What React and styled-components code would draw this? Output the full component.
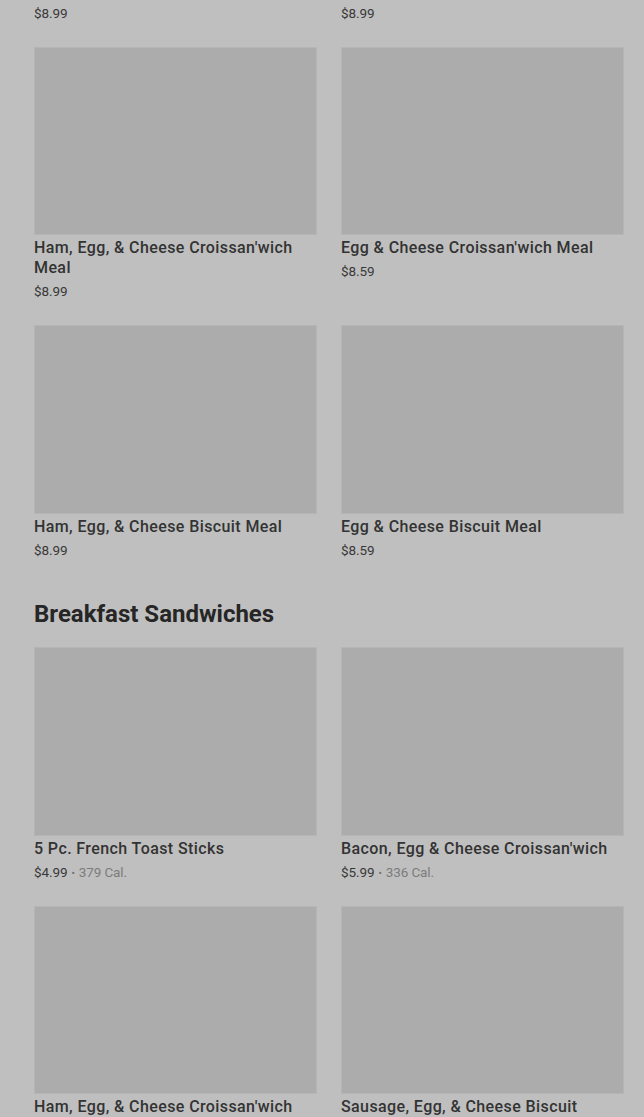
import React from "react";
import styled, { createGlobalStyle } from "styled-components";

const GlobalStyle = createGlobalStyle`
	html, body {
		margin: 0;
		padding: 0;
		background: #bfbfbf;
		overflow: hidden;
	}
	body {
		font-family: Roboto, "Liberation Sans", Arial, sans-serif;
		-webkit-font-smoothing: antialiased;
	}
`;

const sections = [
	{
		title: null,
		items: [
			{ name: "Sausage, Egg, & Cheese Biscuit Meal", price: "$8.99" },
			{ name: "Bacon, Egg & Cheese Croissan'wich", price: "$8.99" },
			{ name: "Ham, Egg, & Cheese Croissan'wich Meal", price: "$8.99" },
			{ name: "Egg & Cheese Croissan'wich Meal", price: "$8.59" },
			{ name: "Ham, Egg, & Cheese Biscuit Meal", price: "$8.99" },
			{ name: "Egg & Cheese Biscuit Meal", price: "$8.59" },
		],
	},
	{
		title: "Breakfast Sandwiches",
		items: [
			{ name: "5 Pc. French Toast Sticks", price: "$4.99", cal: "379 Cal." },
			{ name: "Bacon, Egg & Cheese Croissan'wich", price: "$5.99", cal: "336 Cal." },
			{ name: "Ham, Egg, & Cheese Croissan'wich", price: "$5.99", cal: "330 Cal." },
			{ name: "Sausage, Egg, & Cheese Biscuit", price: "$5.99", cal: "520 Cal." },
		],
	},
];

const App = () => {
	return (
		<>
			<GlobalStyle />
			<Page>
				{sections.map((section, i) => (
					<Section key={i}>
						{section.title && <SectionTitle>{section.title}</SectionTitle>}
						<Grid>
							{section.items.map((item, j) => (
								<Card key={j}>
									<Thumb />
									<ItemName>{item.name}</ItemName>
									<Meta>
										{item.price}
										{item.cal && (
											<>
												<Dot>•</Dot>
												<Cal>{item.cal}</Cal>
											</>
										)}
									</Meta>
								</Card>
							))}
						</Grid>
					</Section>
				))}
			</Page>
		</>
	);
};

const Page = styled.main`
	/* page is scrolled: first row sits mostly above the viewport */
	margin-top: -212px;
	padding: 0 20px 0 34px;
`;
const Section = styled.section`
	& + & {
		margin-top: 41px;
	}
`;
const SectionTitle = styled.h2`
	margin: 0 0 19px;
	font-size: 24px;
	line-height: 28px;
	font-weight: 700;
	letter-spacing: 0;
	color: #262626;
`;
const Grid = styled.div`
	display: grid;
	grid-template-columns: 1fr 1fr;
	column-gap: 24px;
	row-gap: 25px;
`;
const Card = styled.div`
	display: flex;
	flex-direction: column;
	min-width: 0;
`;
const Thumb = styled.div`
	width: 100%;
	aspect-ratio: 3 / 2;
	box-sizing: border-box;
	background: #acacac;
	border: 1px solid #b5b5b5;
`;
const ItemName = styled.div`
	margin-top: 3px;
	font-size: 16px;
	line-height: 20px;
	font-weight: 500;
	letter-spacing: 0.4px;
	color: #333;
`;
const Meta = styled.div`
	margin-top: 4px;
	font-size: 13.5px;
	line-height: 18px;
	color: #383838;
	letter-spacing: -0.1px;
`;
const Dot = styled.span`
	margin: 0 4px;
	font-size: 10px;
	line-height: 0;
	color: #6f6f6f;
`;
const Cal = styled.span`
	color: #7c7c7c;
`;

export default App;
